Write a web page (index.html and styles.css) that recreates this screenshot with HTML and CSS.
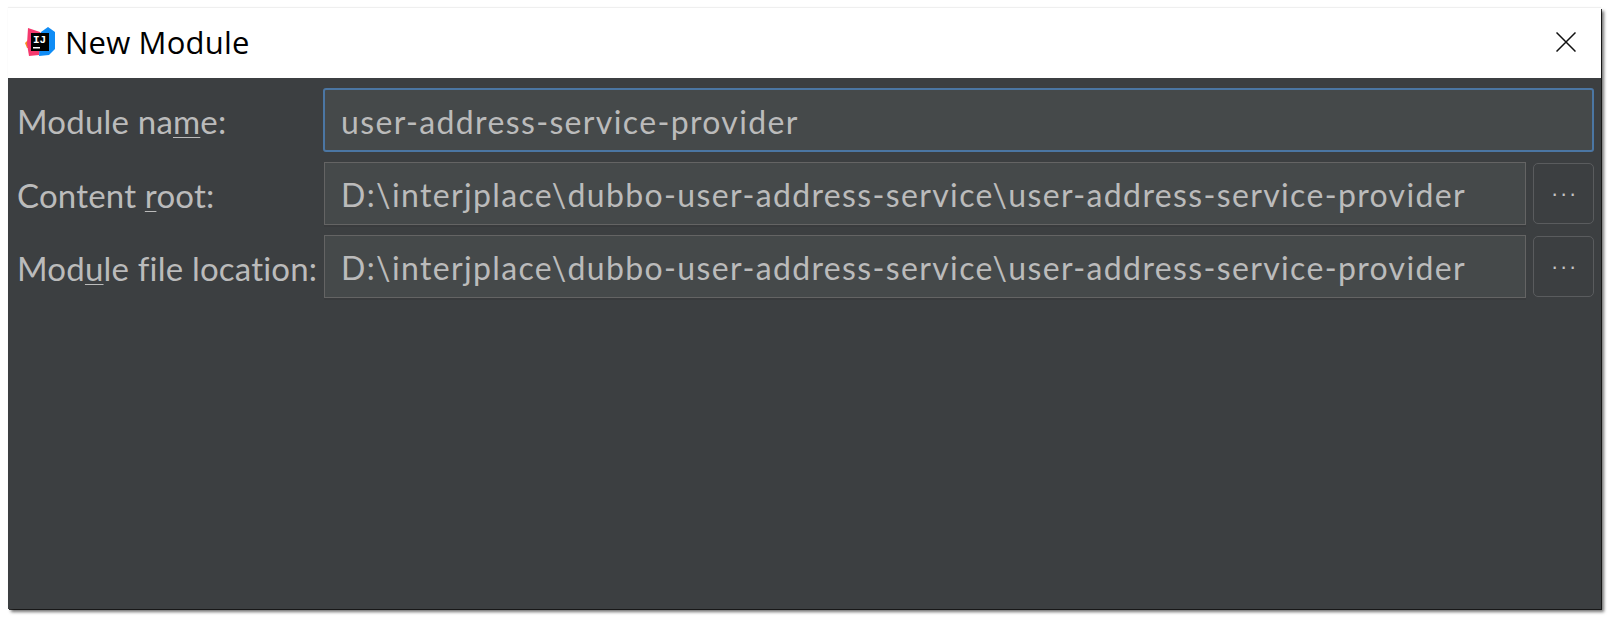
FILE: index.html
```html
<!DOCTYPE html>
<html>
<head>
<meta charset="UTF-8">
<title>New Module</title>
<link rel="stylesheet" href="styles.css">
</head>
<body>
  <div class="dialog">
    <div class="titlebar">
      <svg class="logo" width="30" height="30" viewBox="0 0 30 30">
        <path d="M0 16 L3 13 L7 15 L7 21 L2 21 Z" fill="#f98b1e"/>
        <path d="M3 1 L15 5 L19 11 L14 28 L4 29 L2 17 Z" fill="#f5396d"/>
        <path d="M16 5 L23 0 L30 5 L30 22 L24 28 L14 29 Z" fill="#0f8cf5"/>
        <rect x="6" y="6" width="18" height="18" fill="#000"/>
        <text class="logo-text" x="8" y="16">IJ</text>
        <rect x="8" y="20" width="7" height="1.5" fill="#fff"/>
      </svg>
      <span class="title">New Module</span>
      <svg class="close" width="20" height="20" viewBox="0 0 20 20">
        <path d="M0.5 0.5 L19.5 19.5 M19.5 0.5 L0.5 19.5" stroke="#111" stroke-width="1.5" fill="none"/>
      </svg>
    </div>
    <div class="content">
      <div class="row">
        <label class="label">Module na<u>m</u>e:</label>
        <div class="field focused">user-address-service-provider</div>
      </div>
      <div class="row">
        <label class="label">Content <u>r</u>oot:</label>
        <div class="field">D:\interjplace\dubbo-user-address-service\user-address-service-provider</div>
        <button class="browse" type="button">...</button>
      </div>
      <div class="row">
        <label class="label">Mod<u>u</u>le file location:</label>
        <div class="field">D:\interjplace\dubbo-user-address-service\user-address-service-provider</div>
        <button class="browse" type="button">...</button>
      </div>
    </div>
  </div>
</body>
</html>
```

FILE: styles.css
```css
html, body {
  margin: 0;
  height: 100%;
  background: #fff;
}
body {
  padding: 8px 8px 7px 8px;
  box-sizing: border-box;
  overflow: hidden;
}
.dialog {
  height: 601px;
  width: 1593px;
  display: flex;
  flex-direction: column;
  box-shadow: 1px 1px 0 rgba(0, 0, 0, 0.8), 3px 3px 3px rgba(0, 0, 0, 0.55), 0 -1px 1px rgba(0, 0, 0, 0.06);
}
.titlebar {
  height: 70px;
  flex: none;
  box-sizing: border-box;
  display: flex;
  align-items: center;
  padding: 0 25px 3px 17px;
  background: #fff;
}
.logo {
  flex: none;
}
.logo-text {
  font-family: "Liberation Mono", monospace;
  font-size: 11px;
  font-weight: bold;
  fill: #fff;
}
.title {
  margin-left: 10px;
  font-family: "Open Sans", sans-serif;
  font-size: 31px;
  letter-spacing: 0.2px;
  color: #000;
  flex: 1;
}
.content {
  flex: 1;
  background: #3c3f41;
  padding: 10px 7px 0 9px;
  display: flex;
  flex-direction: column;
  gap: 10px;
  font-family: "Comic Sans MS", Lato, sans-serif;
  color: #bbbbbb;
}
.row {
  display: flex;
  align-items: center;
}
.label {
  width: 307px;
  flex: none;
  padding-top: 2px;
  font-size: 33px;
  letter-spacing: 0.2px;
  white-space: nowrap;
}
.label u {
  text-underline-offset: 3px;
  text-decoration-thickness: 1px;
}
.field {
  flex: 1;
  height: 63px;
  box-sizing: border-box;
  display: flex;
  align-items: center;
  padding: 2px 0 0 16px;
  background: #45494a;
  border: 1px solid #646464;
  font-size: 32px;
  letter-spacing: 1.36px;
  white-space: nowrap;
  box-shadow: 0 2px 0 #393b3d;
}
.field.focused {
  border: 2px solid #4b76a3;
  border-radius: 3px;
  height: 64px;
  margin-left: -1px;
  box-shadow: none;
}
.browse {
  flex: none;
  width: 61px;
  height: 61px;
  margin-left: 7px;
  padding: 0 0 9px 3px;
  background: #3c3f41;
  border: 1px solid #5a5c5e;
  border-radius: 5px;
  color: #c4c4c4;
  font-family: "DejaVu Sans", sans-serif;
  font-size: 20px;
  letter-spacing: 2.6px;
}
```
